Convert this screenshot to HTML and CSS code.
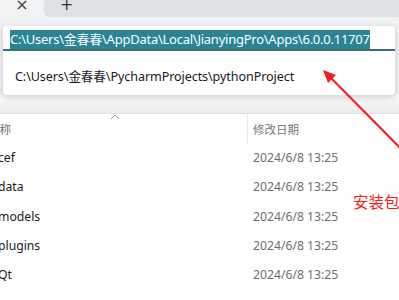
FILE: index.html
```html
<!DOCTYPE html>
<html lang="zh-CN">
<head>
  <meta charset="utf-8">
  <title>Explorer</title>
  <link rel="stylesheet" href="styles.css">
</head>
<body>
  <div class="window">
    <div class="tabs">
      <div class="tab-close">&times;</div>
      <div class="tab-new">+</div>
    </div>

    <div class="toolbar">
      <div class="toolbar-shade"></div>
    </div>

    <div class="dropdown">
      <div class="address">
        <span class="selected">C:\Users\金春春\AppData\Local\JianyingPro\Apps\6.0.0.11707</span>
      </div>
      <div class="suggest">C:\Users\金春春\PycharmProjects\pythonProject</div>
    </div>

    <div class="list">
      <div class="row header">
        <div class="name"><span class="clip-head">名称</span></div>
        <div class="date">修改日期</div>
        <svg class="sort" width="10" height="6" viewBox="0 0 10 6">
          <polyline points="1,5 5,1 9,5" fill="none" stroke="#9a9a9a" stroke-width="1"/>
        </svg>
      </div>
      <div class="row"><div class="name"><span class="clip">cef</span></div><div class="date">2024/6/8 13:25</div></div>
      <div class="row"><div class="name"><span class="clip">data</span></div><div class="date">2024/6/8 13:25</div></div>
      <div class="row"><div class="name"><span class="clip">models</span></div><div class="date">2024/6/8 13:25</div></div>
      <div class="row"><div class="name"><span class="clip">plugins</span></div><div class="date">2024/6/8 13:25</div></div>
      <div class="row"><div class="name"><span class="clip">Qt</span></div><div class="date">2024/6/8 13:25</div></div>
    </div>

    <svg class="annot-arrow" width="399" height="300" viewBox="0 0 399 300">
      <line x1="420" y1="168" x2="329" y2="76" stroke="#f31d1d" stroke-width="2"/>
      <polygon points="323,70 336,75 328,83" fill="#f31d1d"/>
    </svg>
    <div class="annot-text">安装包</div>
  </div>
</body>
</html>
```

FILE: styles.css
```css
html, body {
  margin: 0;
  padding: 0;
  background: #ffffff;
  font-family: "Noto Sans", "Noto Sans CJK SC", sans-serif;
  overflow: hidden;
}

.window {
  position: relative;
  width: 399px;
  height: 300px;
  overflow: hidden;
  background: #ffffff;
}

/* tab strip */
.tabs {
  display: flex;
  height: 17px;
  background: #f1f3f5;
}

.tab-close {
  width: 44px;
  text-align: center;
  font-size: 16px;
  line-height: 10px;
  color: #444;
  font-family: "DejaVu Sans", sans-serif;
}

.tab-new {
  flex: 1;
  background: #dde2e6;
  border-radius: 0 0 0 5px;
  font-size: 16px;
  line-height: 10px;
  color: #333;
  padding-left: 16px;
  font-family: "DejaVu Sans", sans-serif;
}

.toolbar {
  height: 96px;
  background: #eef0f2;
  display: flex;
  flex-direction: column;
  justify-content: flex-end;
  border-bottom: 1px solid #d9e3e6;
}

.toolbar-shade {
  height: 18px;
  background: linear-gradient(#fafafa, #ebebeb);
}

/* address dropdown (overlay) */
.dropdown {
  position: absolute;
  left: 3px;
  top: 26px;
  width: 392px;
  height: 69px;
  background: #ffffff;
  border-radius: 4px;
  box-shadow: 0 2px 6px rgba(0, 0, 0, 0.18);
}

.address {
  height: 25px;
  padding: 7px 0 0 7px;
  box-sizing: border-box;
  border-bottom: 2px solid #3d6e76;
  font-size: 13px;
  line-height: 13px;
  letter-spacing: -0.25px;
  white-space: nowrap;
}

.selected {
  background: #2a8494;
  color: #ffffff;
  padding: 0 0 1px 0;
}

.suggest {
  padding: 19px 0 0 12px;
  font-size: 12.6px;
  line-height: 14px;
  color: #1a1a1a;
  white-space: nowrap;
  letter-spacing: -0.1px;
}

/* file list */
.list {
  display: flex;
  flex-direction: column;
}

.row {
  display: flex;
  align-items: center;
  height: 29.25px;
  font-size: 12.2px;
  color: #1b1b1b;
}

.row.header {
  position: relative;
  height: 29px;
  color: #6f6f6f;
  font-size: 11.5px;
}

.name {
  width: 247px;
  overflow: hidden;
  white-space: nowrap;
}

.clip {
  margin-left: -2px;
}

.clip-head {
  display: inline-block;
  margin-left: -12px;
}

.date {
  padding-left: 6px;
  color: #6e6e6e;
  white-space: nowrap;
}

.header .date {
  align-self: stretch;
  display: flex;
  align-items: center;
  border-left: 1px solid #e8e8e8;
  padding-left: 5px;
  color: #777;
}

.sort {
  position: absolute;
  left: 110px;
  top: 0;
}

/* annotation overlay */
.annot-arrow {
  position: absolute;
  left: 0;
  top: 0;
}

.annot-text {
  position: absolute;
  left: 353px;
  top: 191px;
  font-size: 15.5px;
  line-height: 20px;
  color: #f31d1d;
  font-family: "Noto Sans CJK SC", sans-serif;
  white-space: nowrap;
}
```
